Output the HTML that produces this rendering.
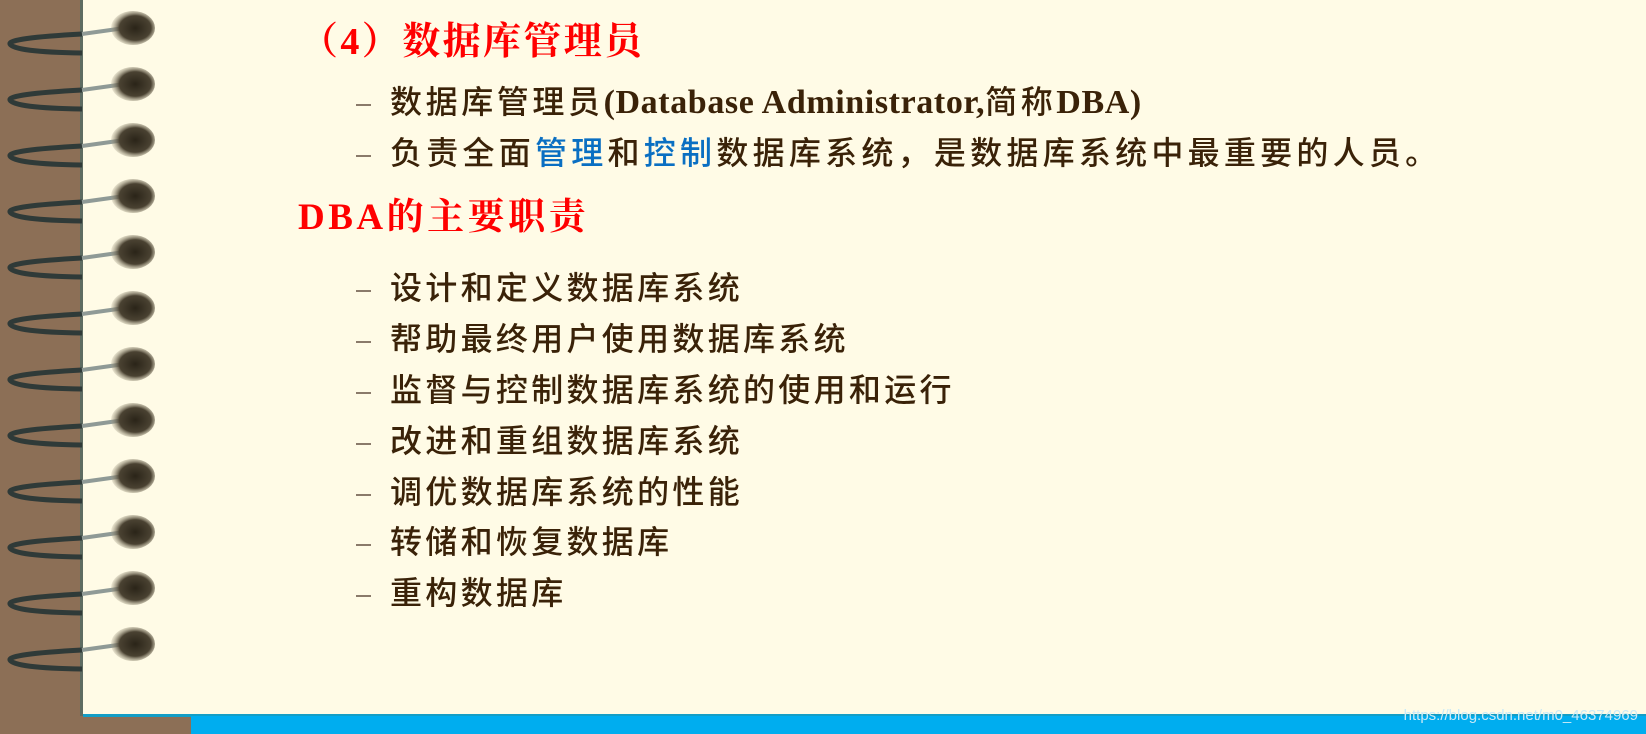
<!DOCTYPE html>
<html><head><meta charset="utf-8"><style>
html,body{margin:0;padding:0}
body{width:1646px;height:734px;position:relative;overflow:hidden;background:#8c6f56;font-family:"Liberation Serif","Noto Serif CJK SC","Noto Sans CJK SC",serif}
#paper{position:absolute;left:83px;top:0;width:1563px;height:714px;background:#fffbe6}
#edge{position:absolute;left:80px;top:0;width:3px;height:716px;background:#5e6c62}
#blue{position:absolute;left:191px;top:716px;width:1455px;height:18px;background:#00adef}
#bl2{position:absolute;left:83px;top:714px;width:1563px;height:3px;background:#139ec6}
.t{position:absolute;white-space:nowrap;line-height:1;color:#3a2208}
.cjk{font-family:"Liberation Sans","Noto Sans CJK SC",sans-serif;font-weight:500}
.d{position:absolute;left:356px;width:15px;height:2px;background:#8a7a6a}
.url{position:absolute;right:8px;top:707px;font:15px "Liberation Sans",sans-serif;color:#c9eaf7}
b.l{font-family:'Liberation Serif',serif;letter-spacing:0.6px;font-size:34px}
</style></head><body>
<div id="paper"></div><div id="edge"></div><div id="bl2"></div><div id="blue"></div>
<svg width="200" height="734" style="position:absolute;left:0;top:0">
<defs><radialGradient id="g" cx="0.55" cy="0.5" r="0.6"><stop offset="0" stop-color="#2a2418"/><stop offset="0.6" stop-color="#4a4232"/><stop offset="1" stop-color="#bdb59a" stop-opacity="0"/></radialGradient></defs>
<g id="r">
<path d="M82 34 Q8 38 10 44 Q14 52 82 53" fill="none" stroke="#2f3a38" stroke-width="5"/>
<path d="M82 34 L125 28" fill="none" stroke="#8f9a96" stroke-width="4"/>
<ellipse cx="133" cy="28" rx="22" ry="17" fill="url(#g)"/>
</g>
<use href="#r" y="56"/><use href="#r" y="112"/><use href="#r" y="168"/><use href="#r" y="224"/><use href="#r" y="280"/><use href="#r" y="336"/><use href="#r" y="392"/><use href="#r" y="448"/><use href="#r" y="504"/><use href="#r" y="560"/><use href="#r" y="616"/>
</svg>
<div class="t" style="left:300px;top:23px;font-size:38px;letter-spacing:2.4px;color:#f00;font-weight:bold">（4）数据库管理员</div>
<div class="d" style="top:104px"></div>
<div class="t cjk" style="left:390px;top:86px;font-size:32px;letter-spacing:3.6px">数据库管理员<b class="l">(Database Administrator,</b>简称<b class="l">DBA)</b></div>
<div class="d" style="top:155px"></div>
<div class="t cjk" style="left:390px;top:137px;font-size:32px;letter-spacing:4.25px">负责全面<span style="color:#0a6fc2">管理</span>和<span style="color:#0a6fc2">控制</span>数据库系统，是数据库系统中最重要的人员。</div>
<div class="t" style="left:298px;top:199px;font-size:37px;font-weight:bold;color:#f00;letter-spacing:3.5px">DBA的主要职责</div>
<div class="d" style="top:290px"></div><div class="t cjk" style="left:390px;top:272px;font-size:32px;letter-spacing:3.3px">设计和定义数据库系统</div>
<div class="d" style="top:341px"></div><div class="t cjk" style="left:390px;top:323px;font-size:32px;letter-spacing:3.3px">帮助最终用户使用数据库系统</div>
<div class="d" style="top:392px"></div><div class="t cjk" style="left:390px;top:374px;font-size:32px;letter-spacing:3.3px">监督与控制数据库系统的使用和运行</div>
<div class="d" style="top:443px"></div><div class="t cjk" style="left:390px;top:425px;font-size:32px;letter-spacing:3.3px">改进和重组数据库系统</div>
<div class="d" style="top:494px"></div><div class="t cjk" style="left:390px;top:476px;font-size:32px;letter-spacing:3.3px">调优数据库系统的性能</div>
<div class="d" style="top:544px"></div><div class="t cjk" style="left:390px;top:526px;font-size:32px;letter-spacing:3.3px">转储和恢复数据库</div>
<div class="d" style="top:595px"></div><div class="t cjk" style="left:390px;top:577px;font-size:32px;letter-spacing:3.3px">重构数据库</div>
<div class="url">https://blog.csdn.net/m0_46374969</div>
</body></html>
